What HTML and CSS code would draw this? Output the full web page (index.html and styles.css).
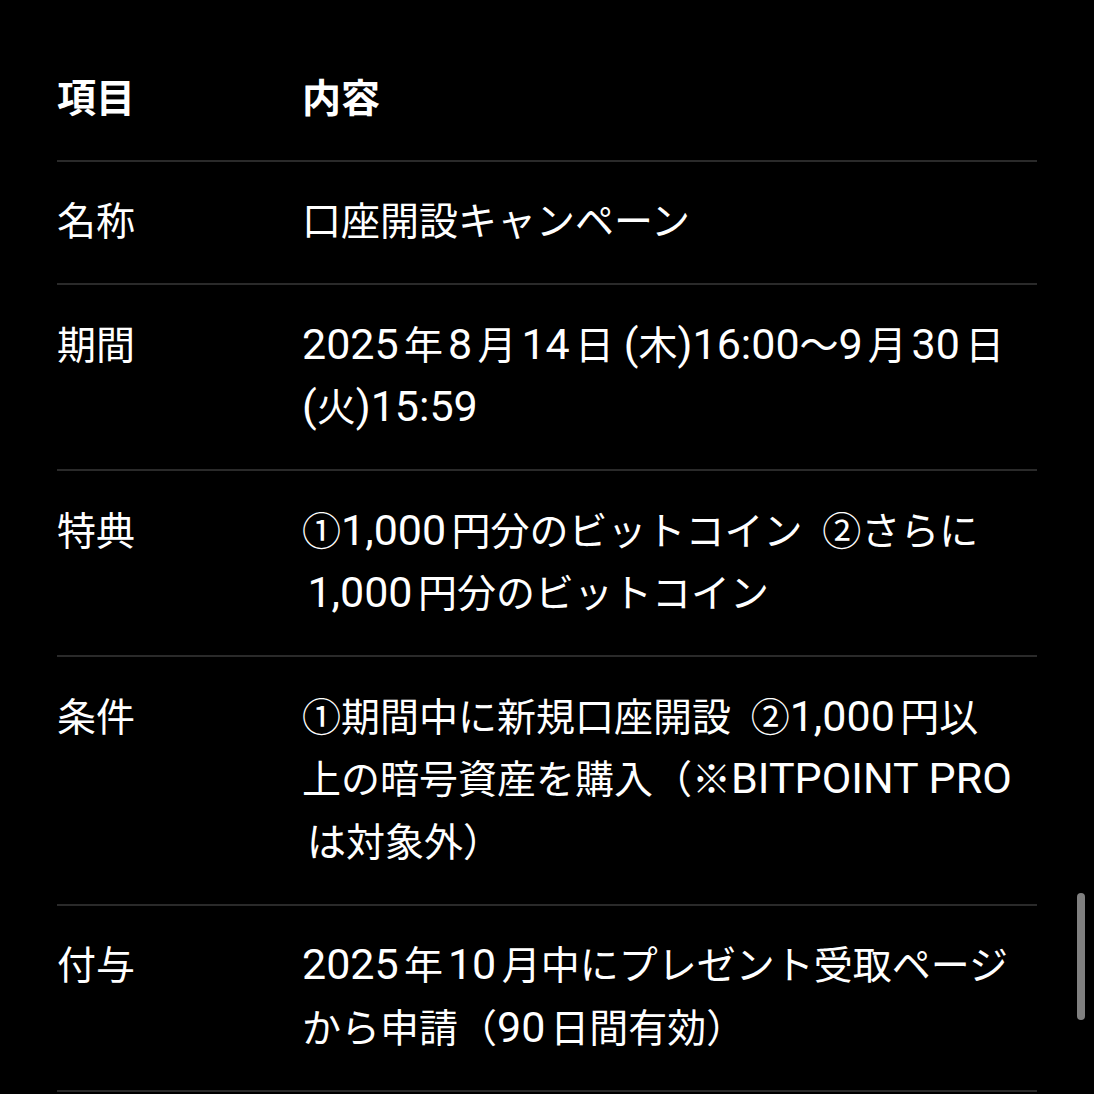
FILE: index.html
```html
<!DOCTYPE html>
<html lang="ja">
<head>
<meta charset="utf-8">
<link rel="stylesheet" href="styles.css">
</head>
<body>
<div class="table">
  <div class="row head">
    <div class="key">項目</div>
    <div class="val">内容</div>
  </div>
  <div class="row">
    <div class="key">名称</div>
    <div class="val">口座開設キャンペーン</div>
  </div>
  <div class="row">
    <div class="key">期間</div>
    <div class="val"><span class="en">2025</span>年<span class="en">8</span>月<span class="en">14</span>日 <span class="en">(</span>木<span class="en">)16:00</span>～<span class="en">9</span>月<span class="en">30</span>日 <span class="en">(</span>火<span class="en">)15:59</span></div>
  </div>
  <div class="row">
    <div class="key">特典</div>
    <div class="val">①<span class="en">1,000</span>円分のビットコイン <span class="mark">②</span>さらに<span class="en">1,000</span>円分のビットコイン</div>
  </div>
  <div class="row">
    <div class="key">条件</div>
    <div class="val">①期間中に新規口座開設 <span class="mark">②</span><span class="en">1,000</span>円以上の暗号資産を購入（※<span class="en">BITPOINT PRO</span>は対象外）</div>
  </div>
  <div class="row">
    <div class="key">付与</div>
    <div class="val"><span class="en">2025</span>年<span class="en">10</span>月中にプレゼント受取ページから申請（<span class="en">90</span>日間有効）</div>
  </div>
</div>
<div class="scrollbar"></div>
</body>
</html>
```

FILE: styles.css
```css
html, body {
  margin: 0;
  padding: 0;
  background: #000;
}
body {
  color: #fff;
  font-family: Roboto, "Noto Sans CJK JP", sans-serif;
  font-size: 39px;
  line-height: 62.5px;
  text-autospace: normal;
  overflow: hidden;
  height: 1094px;
}
.table {
  margin: 0 57px;
  padding-top: 38px;
  width: 980px;
}
.row {
  display: grid;
  grid-template-columns: 245px 1fr;
  padding: 29.5px 22px 29.5px 0;
  border-bottom: 2px solid #2a2a2a;
}
.head {
  font-weight: 700;
}
.en {
  font-size: 43px;
  line-height: 1;
}
.mark {
  margin-left: 10px;
}
.scrollbar {
  position: fixed;
  left: 1077px;
  top: 893px;
  width: 8px;
  height: 127px;
  border-radius: 4px;
  background: #808080;
}
```
